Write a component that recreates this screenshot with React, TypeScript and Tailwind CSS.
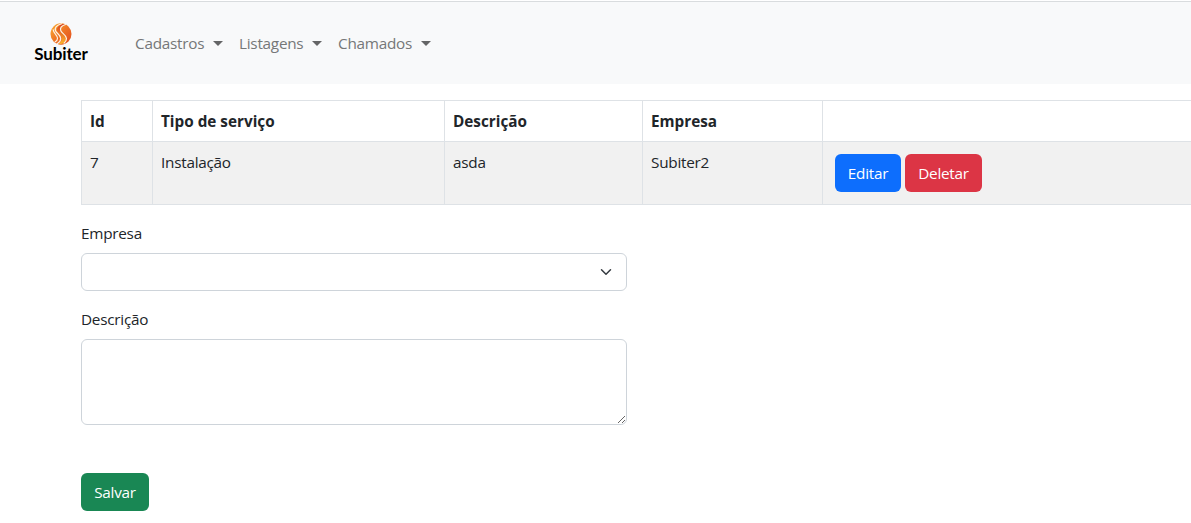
import { ReactNode } from "react";

function Logo() {
  return (
    <a href="#" className="flex w-[54px] flex-col items-center">
      <svg width="22" height="22" viewBox="0 0 22 22">
        <defs>
          <linearGradient id="flame" x1="0" y1="0" x2="1" y2="1">
            <stop offset="0" stopColor="#fbb034" />
            <stop offset="0.5" stopColor="#ee7424" />
            <stop offset="1" stopColor="#e0481f" />
          </linearGradient>
          <linearGradient id="glow" x1="0" y1="0" x2="0" y2="1">
            <stop offset="0" stopColor="#d9401f" />
            <stop offset="1" stopColor="#fbb52b" />
          </linearGradient>
        </defs>
        <ellipse cx="11" cy="11" rx="10.500" ry="10.700" fill="url(#flame)" />
        <path d="M13 1C8 2.500 6.300 5.300 7.300 8c1 2.800 4.500 4 4.500 7.500 0 2.300-1.300 4-3.300 5.600 4.500.3 7.500-2 7.500-5.600 0-4-5-5-5.500-8.500C10.200 4.500 12 2.500 15 1Z" fill="url(#glow)" />
        <g fill="none" stroke="#fdf3e6" strokeWidth="1.200" strokeLinecap="round">
          <path d="M11.500.8C6 2.500 4.500 5.200 5.500 7.800c1.100 2.900 5.200 4 5.200 7.700 0 2.200-1.500 4.100-3.500 5.300" />
          <path d="M15.500 1.500c-4.500 1.300-5.700 3.800-4.700 6.300 1.100 2.900 5.700 4 5.700 7.700 0 2-1 3.400-2.500 4.700" />
          <path d="M3.200 6.800c.3 3.700 4.300 4.900 4.300 8.500 0 1.500-.9 2.700-2.300 3.500" />
        </g>
      </svg>
      <span className="-mt-px font-['Lato',sans-serif] text-[17px] leading-[19px] font-bold tracking-[-0.1px] text-black">
        Subiter
      </span>
    </a>
  );
}

function NavItem({ label, className }: { label: string; className: string }) {
  return (
    <a href="#" className={`flex items-center whitespace-nowrap text-[#757778] ${className}`}>
      <span className="flex-1">{label}</span>
      <span className="h-0 w-0 border-x-[5px] border-t-[5px] border-x-transparent border-t-[#646566]" />
    </a>
  );
}

function Button({ className, children }: { className: string; children: ReactNode }) {
  return (
    <button type="button" className={`h-[38px] rounded-md text-center text-white ${className}`}>
      {children}
    </button>
  );
}

const cell = "border border-[#dee2e6] px-2 pt-[8px] text-left align-top leading-6";

export default function App() {
  return (
    <div className="h-[523px] overflow-hidden bg-white font-['Open_Sans',sans-serif] text-[15.3px] leading-6 font-[370] tracking-[-0.25px] text-[#212529]">
      <header className="mt-px flex h-[83px] items-center border-t border-[#d9dcde] bg-[#f8f9fa] pl-[34px]">
        <Logo />
        <nav className="ml-[47px] flex gap-4">
          <NavItem label="Cadastros" className="w-[88px]" />
          <NavItem label="Listagens" className="w-[83px]" />
          <NavItem label="Chamados" className="w-[93px]" />
        </nav>
      </header>

      <main className="pt-4 pl-[81px]">
        <table className="w-[1200px] table-fixed border-collapse">
          <colgroup>
            <col className="w-[71px]" />
            <col className="w-[292px]" />
            <col className="w-[198px]" />
            <col className="w-[180px]" />
            <col />
          </colgroup>
          <thead>
            <tr className="h-[41px] font-bold tracking-[0px]">
              <th className={cell}>Id</th>
              <th className={cell}>Tipo de serviço</th>
              <th className={cell}>Descrição</th>
              <th className={cell}>Empresa</th>
              <th className={cell} />
            </tr>
          </thead>
          <tbody>
            <tr className="h-[63px] bg-[#f1f1f1]">
              <td className={cell}>7</td>
              <td className={cell}>Instalação</td>
              <td className={cell}>asda</td>
              <td className={cell}>Subiter2</td>
              <td className="border border-[#dee2e6] pl-3 align-middle">
                <div className="flex gap-1">
                  <Button className="w-[66px] bg-[#0d6efd]">Editar</Button>
                  <Button className="w-[77px] bg-[#dc3545]">Deletar</Button>
                </div>
              </td>
            </tr>
          </tbody>
        </table>

        <form className="flex w-[546px] flex-col items-start pt-4">
          <label className="mb-2">Empresa</label>
          <div className="mb-4 flex h-[38px] w-full items-center justify-end rounded-md border border-[#ced4da] pr-3">
            <svg width="16" height="12" viewBox="0 0 16 16" fill="none" stroke="#343a40" strokeWidth="2" strokeLinecap="round" strokeLinejoin="round">
              <path d="m2 5 6 6 6-6" />
            </svg>
          </div>
          <label className="mb-2">Descrição</label>
          <textarea className="mb-12 block h-[86px] w-full resize rounded-md border border-[#ced4da] px-3 py-1.5" />
          <Button className="w-[68px] bg-[#198754]">Salvar</Button>
        </form>
      </main>
    </div>
  );
}
